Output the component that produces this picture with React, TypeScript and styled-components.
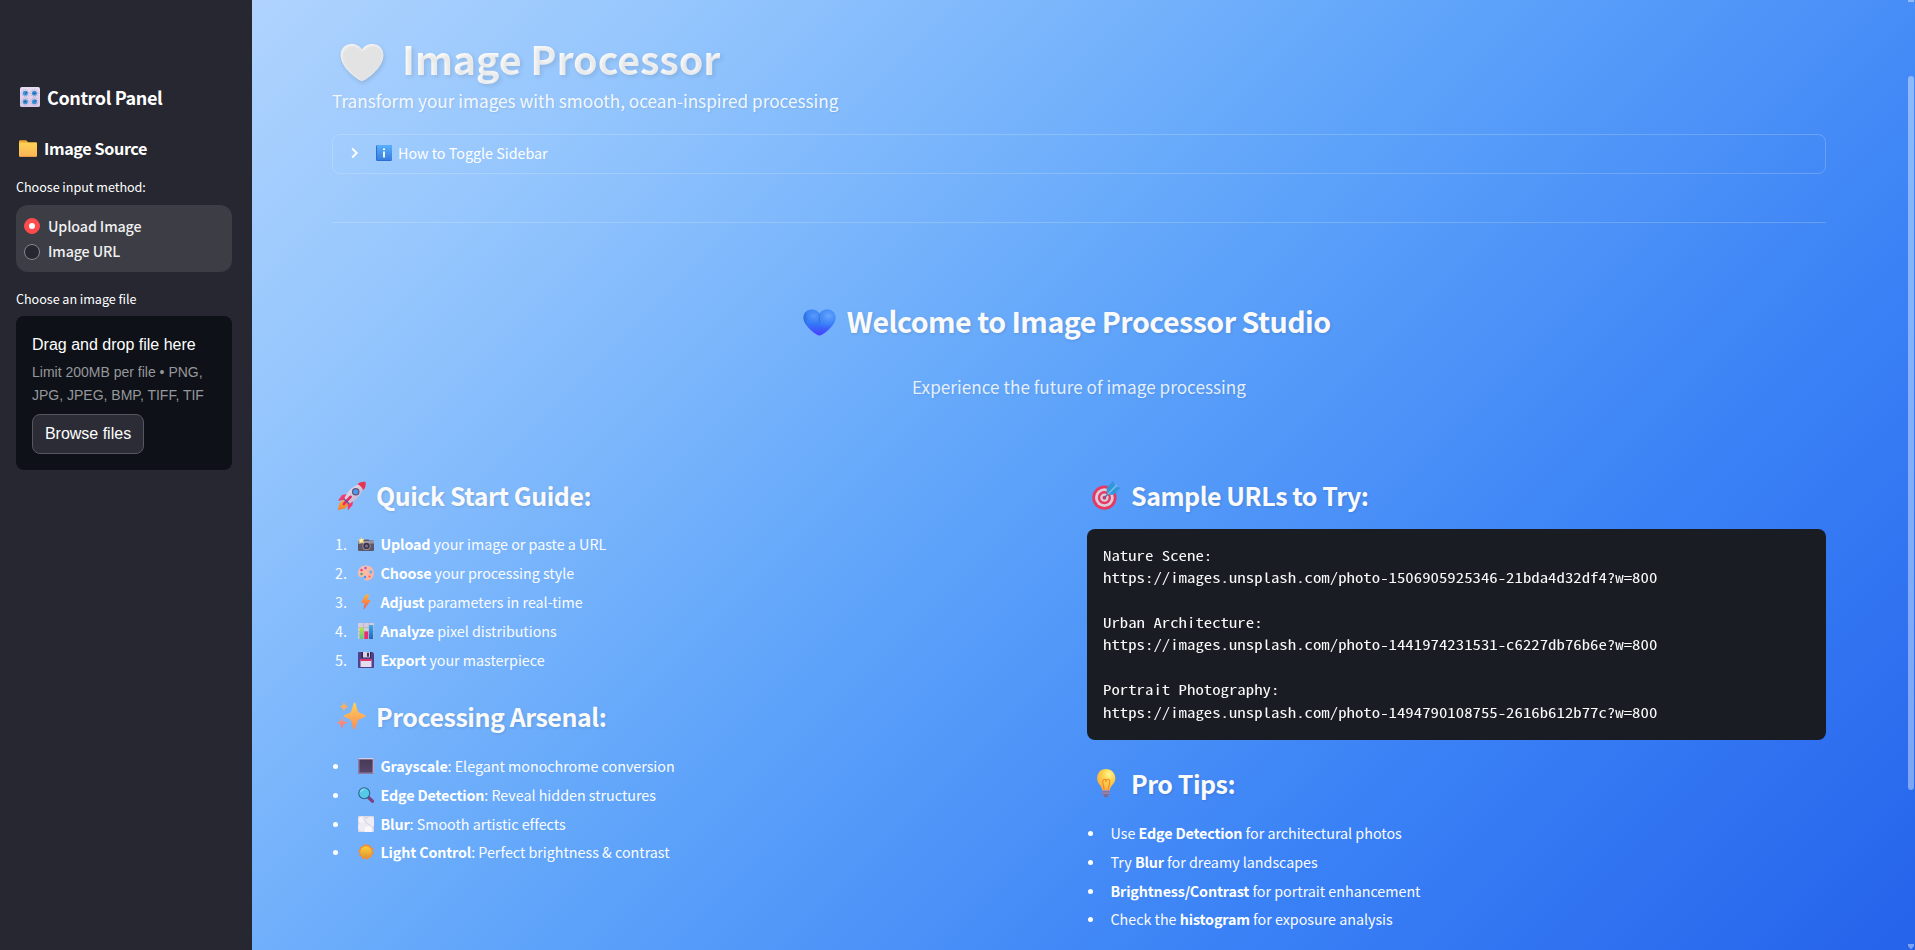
import React from "react";
import styled, { createGlobalStyle } from "styled-components";

const sans = `"Source Sans Pro", "Noto Sans CJK SC", "Noto Sans", sans-serif`;
const mono = `"Noto Sans Mono CJK SC", "Liberation Mono", monospace`;

const GlobalStyle = createGlobalStyle`
  html, body { margin: 0; padding: 0; height: 100%; overflow: hidden; }
  #root { height: 100%; }
  *, *::before, *::after { box-sizing: border-box; }
`;

const Shell = styled.div`
  display: flex;
  position: relative;
  width: 100%;
  height: 950px;
  overflow: hidden;
  color: #fafafa;
  font-family: ${sans};
  background: linear-gradient(135deg, #bfdbfe 0%, #93c5fd 25%, #60a5fa 50%, #3b82f6 75%, #2563eb 100%);
`;

const Sidebar = styled.aside`
  flex: 0 0 252px;
  padding: 79px 20px 0 16px;
  background: #262730;
`;

const SideHeading = styled.h2<{ $size: number; $gap: number; $left: number; $top: number }>`
  display: flex;
  align-items: center;
  gap: ${(p) => p.$gap}px;
  height: 36px;
  margin: ${(p) => p.$top}px 0 0;
  padding-left: ${(p) => p.$left}px;
  font-size: ${(p) => p.$size}px;
  line-height: 36px;
  font-weight: 600;
  letter-spacing: -0.4px;
  white-space: nowrap;
  color: #fff;
`;

const FieldLabel = styled.div<{ $top: number }>`
  margin-top: ${(p) => p.$top}px;
  font-size: 12.6px;
  line-height: 20px;
  letter-spacing: -0.04px;
  color: #fff;
`;

const RadioGroup = styled.div`
  display: flex;
  flex-direction: column;
  gap: 2px;
  height: 67px;
  margin-top: 8px;
  padding: 9px 8px;
  border-radius: 12px;
  background: rgba(255, 255, 255, 0.1);
`;

const RadioRow = styled.div<{ $raise?: number }>`
  display: flex;
  align-items: center;
  gap: 8px;
  height: 24px;
  font-size: 14.3px;
  line-height: 24px;
  font-weight: 500;
  letter-spacing: -0.13px;
  color: #f0f0f1;
  span + span { margin-top: -${(p) => p.$raise ?? 0}px; }
`;

const RadioDot = styled.span<{ $on?: boolean }>`
  display: flex;
  align-items: center;
  justify-content: center;
  width: 16px;
  height: 16px;
  border-radius: 50%;
  border: 1px solid ${(p) => (p.$on ? "#ff4b4b" : "#86868b")};
  background: ${(p) => (p.$on ? "#ff4b4b" : "#262730")};
  &::after {
    content: "";
    width: 6px;
    height: 6px;
    border-radius: 50%;
    background: ${(p) => (p.$on ? "#fff" : "transparent")};
  }
`;

const Dropzone = styled.section`
  height: 154px;
  margin-top: 7px;
  padding: 16px;
  border-radius: 8px;
  background: #0e1117;
  font-family: "Liberation Sans", Arial, sans-serif;
`;

const DropTitle = styled.div`
  font-size: 16px;
  line-height: 25px;
  color: #fff;
`;

const DropHint = styled.div`
  margin-top: 4px;
  font-size: 14px;
  line-height: 23px;
  color: #96979a;
  white-space: nowrap;
`;

const BrowseButton = styled.button`
  width: 112px;
  height: 40px;
  margin-top: 7px;
  padding: 0;
  border: 1px solid #55565e;
  border-radius: 8px;
  background: #2b2c36;
  color: #fff;
  font: 16px "Liberation Sans", Arial, sans-serif;
`;

const Main = styled.main`
  flex: 1;
  min-width: 0;
  padding: 31px 89px 0 80px;
`;

const TitleRow = styled.div`
  display: flex;
  align-items: center;
  gap: 18px;
  height: 53px;
  padding-left: 8px;
`;

const Title = styled.h1`
  margin: 0;
  font-size: 39.5px;
  line-height: 53px;
  font-weight: 700;
  letter-spacing: -0.15px;
  white-space: nowrap;
  background: linear-gradient(45deg, #fff, #fafcff);
  background-clip: text;
  -webkit-background-clip: text;
  -webkit-text-fill-color: transparent;
  text-shadow: 2px 2px 4px rgba(0, 0, 0, 0.1);
`;

const Lead = styled.p<{ $top: number; $center?: boolean }>`
  margin: ${(p) => p.$top}px 0 0;
  font-size: 17.2px;
  line-height: 29px;
  text-align: ${(p) => (p.$center ? "center" : "left")};
  color: ${(p) => (p.$center ? "rgba(255,255,255,0.85)" : "rgba(255,255,255,0.9)")};
  text-shadow: 1px 1px 2px rgba(0, 0, 0, 0.08);
`;

const Expander = styled.div`
  display: flex;
  align-items: center;
  height: 40px;
  margin-top: 19px;
  padding-left: 16px;
  border: 1px solid rgba(250, 250, 250, 0.2);
  border-radius: 8px;
  color: #fff;
  font-size: 14.3px;
  line-height: 24px;
  svg + svg { margin: 0 6px 0 9px; }
  svg, span { position: relative; top: -1px; }
`;

const Divider = styled.hr`
  height: 1px;
  margin: 48px 0 0;
  border: 0;
  background: rgba(250, 250, 250, 0.2);
`;

const Welcome = styled.h2`
  display: flex;
  justify-content: center;
  align-items: center;
  gap: 10.5px;
  height: 38px;
  margin: 79px 0 0;
  padding-right: 24px;
  font-size: 28.6px;
  line-height: 38px;
  font-weight: 600;
  letter-spacing: -0.53px;
  text-shadow: 1px 1px 3px rgba(0, 0, 0, 0.12);
`;

const Columns = styled.div`
  display: grid;
  grid-template-columns: 739px 739px;
  gap: 16px;
  margin-top: 77px;
`;

const Column = styled.section`
  min-width: 0;
`;

const Heading = styled.h3<{ $top?: number }>`
  display: flex;
  align-items: center;
  gap: 10px;
  height: 34px;
  margin: ${(p) => p.$top ?? 0}px 0 0;
  padding-left: 4px;
  font-size: 25px;
  line-height: 34px;
  font-weight: 600;
  letter-spacing: -0.47px;
  white-space: nowrap;
  text-shadow: 1px 1px 3px rgba(0, 0, 0, 0.12);
`;

const List = styled.ul<{ $top: number; $pitch?: number }>`
  display: grid;
  grid-auto-rows: ${(p) => p.$pitch ?? 28.7}px;
  margin: ${(p) => p.$top}px 0 0;
  padding: 0;
  list-style: none;
`;

const Item = styled.li`
  display: flex;
  align-items: center;
  font-size: 14.3px;
  line-height: 28px;
  letter-spacing: -0.01px;
  white-space: pre;
  color: #fafcff;
  b { font-weight: 600; letter-spacing: -0.15px; color: #fff; }
  svg { margin-right: 6.5px; }
`;

const Marker = styled.span<{ $wide?: boolean }>`
  flex: 0 0 ${(p) => (p.$wide ? 26 : 23.5)}px;
  padding-left: ${(p) => (p.$wide ? 3 : 1)}px;
`;

const Bullet = styled.i<{ $shift?: number }>`
  display: block;
  width: 5px;
  height: 5px;
  margin: 1px 0 0 ${(p) => -(p.$shift ?? 0)}px;
  border-radius: 50%;
  background: #fff;
`;

const Code = styled.pre`
  height: 211px;
  margin: 17px 0 0;
  padding: 15px 16px 0;
  overflow: hidden;
  border-radius: 8px;
  background: #1a1c24;
  color: #fafafa;
  font-family: ${mono};
  font-size: 16.81px;
  line-height: 28px;
`;

const CodeText = styled.code`
  display: block;
  font-family: inherit;
  transform: scaleY(0.8);
  transform-origin: 0 0;
`;

const ScrollTrack = styled.div`
  position: absolute;
  top: 0;
  right: 1px;
  width: 6px;
  height: 950px;
  display: flex;
  flex-direction: column;
  color: rgba(255, 255, 255, 0.4);
`;

const ScrollCap = styled.span`
  height: 2px;
  background: currentColor;
`;

const ScrollThumb = styled.span`
  height: 714px;
  margin: 74px 0 154px;
  border-radius: 3px;
  background: currentColor;
`;

type IconProps = { size: number; children: React.ReactNode };
const Icon = ({ size, children }: IconProps) => (
  <svg width={size} height={size} viewBox="0 0 32 32" style={{ flex: "none" }}>{children}</svg>
);

const Grad = ({ id, from, to, x2 = 0, y2 = 1 }: { id: string; from: string; to: string; x2?: number; y2?: number }) => (
  <linearGradient id={id} x1="0" y1="0" x2={x2} y2={y2}>
    <stop offset="0" stopColor={from} /><stop offset="1" stopColor={to} />
  </linearGradient>
);

const heartPath = "M16 31C14 31 .5 21 .5 10.5 .5 5 4 1.500 8.500 1.500c3.500 0 6.200 2 7.500 4.500 1.300-2.500 4-4.500 7.500-4.500 4.500 0 8 3.500 8 9C31.500 21 18 31 16 31Z";

const WhiteHeart = () => (
  <svg width="44" height="40" viewBox="0 0 32 32" preserveAspectRatio="none" style={{ flex: "none", marginTop: 8, overflow: "visible", filter: "drop-shadow(1px 2px 2px rgba(0,0,0,.12))" }}>
    <defs><filter id="wb" x="-20%" y="-20%" width="140%" height="140%"><feGaussianBlur stdDeviation="1" /></filter>
      <clipPath id="wc"><path d={heartPath} /></clipPath></defs>
    <path d={heartPath} fill="#f6f6f6" />
    <g clipPath="url(#wc)"><path d={heartPath} fill="#e3e3e3" filter="url(#wb)" transform="translate(.8 1.200)" /></g>
  </svg>
);

const BlueHeart = () => (
  <Icon size={33}>
    <defs>
      <linearGradient id="bh" x1="0" y1="0" x2="0" y2="1"><stop offset="0" stopColor="#3a84f0" /><stop offset=".55" stopColor="#3278f8" /><stop offset="1" stopColor="#4a3cff" /></linearGradient>
      <radialGradient id="bh2" cx=".78" cy=".25" r=".5"><stop offset="0" stopColor="#68a8ff" /><stop offset="1" stopColor="#3f86f8" stopOpacity="0" /></radialGradient>
      <radialGradient id="bh4" cx=".32" cy=".25" r=".35"><stop offset="0" stopColor="#5b9cfb" /><stop offset="1" stopColor="#3f86f8" stopOpacity="0" /></radialGradient>
      <linearGradient id="bh3"><stop offset="0" stopColor="#1c52ae" stopOpacity=".5" /><stop offset=".15" stopColor="#2c68d0" stopOpacity="0" /></linearGradient>
    </defs>
    <g transform="translate(0 3) scale(1 .86)"><path d={heartPath} fill="url(#bh)" /><path d={heartPath} fill="url(#bh2)" /><path d={heartPath} fill="url(#bh4)" /><path d={heartPath} fill="url(#bh3)" /><path d="M16 6.500V17" stroke="#2a62c8" strokeOpacity=".4" strokeWidth="1.300" /></g>
  </Icon>
);

const Knobs = () => (
  <Icon size={20}>
    <defs><Grad id="kn" from="#e8dcf2" to="#d6c8e8" /></defs>
    <rect width="32" height="32" rx="3" fill="url(#kn)" />
    {[[8.500, 10], [23, 10], [8.500, 23.500], [23, 23.500]].map(([x, y], i) => (
      <g key={i}>
        <circle cx={x} cy={y} r="5.700" fill="none" stroke="#8d7ba3" strokeWidth="1.300" strokeDasharray="1 2.300" />
        <circle cx={x} cy={y} r="4" fill="#3f91d8" />
        <path d={i % 3 === 0 ? `M${x} ${y}l3-2` : `M${x - 2} ${y}h4`} stroke="#174c83" strokeWidth="1.500" />
      </g>
    ))}
  </Icon>
);

const Folder = () => (
  <svg width="18" height="17" viewBox="0 0 18 17" style={{ flex: "none" }}>
    <defs><Grad id="fo" from="#ffd256" to="#fbb454" /></defs>
    <path d="M0 1.500Q0 .2 1.200.2H6.500Q7.400.2 8 1l1.200 1.200H17Q18 2.200 18 3.200V15H0Z" fill="#f0ab30" />
    <rect y="2.800" width="18" height="14" rx="1" fill="url(#fo)" /><path d="M.7 16.500H17.300" stroke="#ea9a48" />
  </svg>
);

const Info = () => (
  <Icon size={16}>
    <defs><Grad id="inf" from="#58b1fb" to="#397de2" /></defs>
    <rect width="32" height="32" rx="3" fill="#2a6fd2" /><rect x="2" width="30" height="30" rx="2" fill="url(#inf)" />
    <circle cx="16" cy="8.500" r="2.200" fill="#fff" /><path d="M16 13v12" stroke="#fff" strokeWidth="3.600" />
  </Icon>
);

const Chevron = () => (
  <svg width="20" height="20" viewBox="0 0 20 20" style={{ flex: "none", marginLeft: -4, marginRight: 2 }} fill="none" stroke="#fff" strokeWidth="1.900">
    <path d="M7.200 5.500 11.700 10 7.200 14.500" />
  </svg>
);

const Rocket = () => (
  <Icon size={30}>
    <defs><Grad id="rk" from="#f3eaf6" to="#b8a6c4" x2={1} /><Grad id="fl" from="#ffb43b" to="#f47b2a" /></defs>
    <g transform="translate(.5 1)">
      <path d="M7 20 3 24 1.500 31 9 29.500 13 25Z" fill="url(#fl)" />
      <path d="M12 14 6 15 1.500 21 9 20ZM18 20l-1 6-5 5.500L12 23Z" fill="#f13b70" />
      <path d="M29 3C20 2.500 12 10 8 19.500L13 24.500C22 20 29.500 12 29 3Z" fill="url(#rk)" />
      <path d="M22.500 3.500C25 1 28.500.5 31 1 31.500 4 31 7 28.500 10 27.500 7 25 4.500 22.500 3.500Z" fill="#e9344f" />
      <circle cx="20.500" cy="11.500" r="4" fill="#61517a" /><circle cx="20.500" cy="11.500" r="2.700" fill="#4b9cef" />
      <path d="M15 17 8 24.500" stroke="#e52b68" strokeWidth="3" strokeLinecap="round" /><path d="M8 19l5.500 5.500" stroke="#6e4e8d" strokeWidth="1.500" />
    </g>
  </Icon>
);

const Camera = () => (
  <Icon size={16}>
    <rect y="9" width="32" height="21" rx="2" fill="#5d5767" /><rect y="10" width="32" height="5" fill="#9b93a1" />
    <path d="M10 10l2-3h9l2 3Z" fill="#625a6e" /><circle cx="17" cy="20" r="8" fill="#a9a2b0" /><circle cx="17" cy="20" r="6.500" fill="#3b3345" /><circle cx="17" cy="20" r="3" fill="#7e7294" />
    <path d="M6 2 8 6 13 6 10 10 12 14 7 13 3 16 3 11 0 7 5 7Z" fill="#ffe07a" /><circle cx="6.500" cy="9" r="2.500" fill="#fff6c6" />
  </Icon>
);

const Palette = () => (
  <Icon size={16}>
    <defs><Grad id="pl" from="#ffc0a5" to="#fbb0a2" x2={1} /></defs>
    <path d="M16 1C7 1 0 8 0 17c0 6 5 9 9 7 3-1 4 1 4 4 1 4 6 4 10 2 6-3 9-8 9-14C32 7 25 1 16 1Z" fill="url(#pl)" />
    <circle cx="25.500" cy="14" r="3.300" fill="#6bb0f9" /><circle cx="15" cy="6" r="2.500" fill="#9b5be0" /><circle cx="7" cy="10" r="2.500" fill="#e14284" /><circle cx="7" cy="18" r="2.500" fill="#3fae80" /><circle cx="14" cy="24" r="2.500" fill="#4694ee" /><circle cx="23" cy="23" r="2.200" fill="#f9654b" />
  </Icon>
);

const Bolt = () => (
  <Icon size={16}>
    <defs><Grad id="bo" from="#ffb33c" to="#f15a4a" /></defs>
    <path d="M18 1h4.500L18.500 12H24q2 0 .8 1.800L12.500 30q-1.700 1.300-1.300-1L13 18H8q-2 0-1.200-2L14 3q1.200-2 4-2Z" fill="url(#bo)" />
  </Icon>
);

const Bars = () => (
  <Icon size={16}>
    <defs><Grad id="ba" from="#b5e83b" to="#5cc887" /><Grad id="bb" from="#41a8ea" to="#176bc0" /></defs>
    <rect width="32" height="32" rx="2" fill="#d5cddd" /><path d="M0 9H32M0 17H32M0 24H32M11 0V32M22 0V32" stroke="#a89fb4" strokeWidth="1" />
    <rect x="3" y="9" width="8" height="23" fill="url(#ba)" /><rect x="12.500" y="17" width="8" height="15" fill="#e62d70" /><rect x="22" y="4" width="8.500" height="28" fill="url(#bb)" />
  </Icon>
);

const Floppy = () => (
  <Icon size={16}>
    <path d="M0 2Q0 0 2 0H29L32 3V30Q32 32 30 32H2Q0 32 0 30Z" fill="#51408a" /><rect x="7" width="19" height="12" fill="#2e2553" />
    <path d="M10 0H24V11H10Z" fill="#d9d2e3" /><rect x="18" y="1.500" width="4" height="8" fill="#40345e" /><rect x="5" y="15" width="22" height="15" fill="#e7dcee" /><rect x="5" y="14" width="22" height="4" fill="#e03368" />
  </Icon>
);

const Sparkles = () => (
  <Icon size={30}>
    <defs><Grad id="sp" from="#ffd257" to="#fb8b56" /><Grad id="sq" from="#ff9c72" to="#f9717b" /></defs>
    <path d="M19 2Q20 1 21 3L23 10Q24 12 26 13L31 15Q32.500 16 31 17L25 19.500Q23.500 20 23 22L20.500 29.500Q19.500 31 18.500 29.500L16.500 22Q16 20 14 19L9 17Q7.500 16 9 15L14 13Q16 12 16.500 10Z" fill="url(#sp)" />
    <path d="M8.500 1 10 4.500 13.500 6 10 7.500 8.500 11 7 7.500 4 6 7 4.500Z" fill="#fcaf5a" />
    <path d="M6.500 17 8 21.500 12.500 23 8 25 6.500 30 5 25 .5 23 5 21.500Z" fill="url(#sq)" />
  </Icon>
);

const SquareButton = () => (
  <Icon size={16}>
    <defs><Grad id="sb" from="#463a56" to="#56466a" /></defs>
    <rect width="32" height="32" rx="1" fill="#8d7ca2" /><path d="M0 0H32L29 3H3Z" fill="#d8cbe6" /><path d="M32 0V32L29 29V3Z" fill="#b8a4cb" /><rect x="3" y="3" width="26" height="26" fill="url(#sb)" />
  </Icon>
);

const Magnifier = () => (
  <Icon size={16}>
    <path d="M20 20 29 28.500" stroke="#7b4388" strokeWidth="6.500" strokeLinecap="round" /><circle cx="12.500" cy="12.500" r="12" fill="#34618b" /><circle cx="12.500" cy="12.500" r="9.800" fill="#54c9e8" /><path d="M5 10a8 8 0 0 1 8-5" stroke="#91e1f2" strokeWidth="2.500" fill="none" />
  </Icon>
);

const Fog = () => (
  <Icon size={16}>
    <rect width="32" height="32" rx="2" fill="#dcd6e5" /><circle cx="8" cy="8" r="7" fill="#f5f2f8" /><circle cx="25" cy="12" r="10" fill="#efecf5" /><circle cx="9" cy="22" r="9" fill="#eeebf4" /><circle cx="21" cy="28" r="8" fill="#faf8fc" /><path d="M12 2c-2 6 3 8 5 11s6 4 9 8" stroke="#cac6d6" strokeWidth="1.500" fill="none" />
  </Icon>
);

const Sun = () => (
  <Icon size={16}>
    <defs><Grad id="sn" from="#ffd036" to="#dc9738" /></defs>
    <path d="M16 0 20 3 25 2 26 7 31 9 29 14 32 18 28 21 28 26 22.500 27 19 32 15 28.500 9 30.500 7.500 25.500 2 23 3.500 18 0 14 4 11 4 6 9.500 5 12 1Z" fill="#f78b31" /><circle cx="16" cy="16" r="11.500" fill="url(#sn)" />
  </Icon>
);

const Target = () => (
  <Icon size={30}>
    <g transform="translate(.8 .3)">
      <circle cx="13.500" cy="18.500" r="13" fill="#e63962" /><circle cx="13.500" cy="18.500" r="10" fill="#dccbdc" /><circle cx="13.500" cy="18.500" r="7" fill="#e63962" /><circle cx="13.500" cy="18.500" r="4.500" fill="#dccbdc" /><circle cx="13.500" cy="18.500" r="2" fill="#c33966" />
      <path d="M14 18 24 8" stroke="#5c6e9b" strokeWidth="1.600" /><path d="M16 13.500V8L23 .5 24.500 6.500 30.500 8 23.500 15.500H18Z" fill="#3396d8" /><path d="M17 15 27 5" stroke="#70c3ef" strokeWidth="1.500" />
    </g>
  </Icon>
);

const Bulb = () => (
  <Icon size={30}>
    <defs><radialGradient id="bu" cx=".65" cy=".25" r=".8"><stop offset="0" stopColor="#fff5a0" /><stop offset=".35" stopColor="#ffd84e" /><stop offset="1" stopColor="#f9a83f" /></radialGradient></defs>
    <path d="M16 1C10 1 6.500 5.500 6.500 11c0 6 5 7.500 5.500 13h8c.5-5.500 6-7 6-13C26 5.500 22 1 16 1Z" fill="url(#bu)" />
    <path d="M14 23 12.500 15q0-3 2-3 1.500 0 1.500 3 0-3 2-3t2 3L18.500 23" stroke="#f28b2c" strokeWidth="1.300" fill="none" /><rect x="12" y="23.500" width="8" height="5.500" rx="1" fill="#a493b5" /><path d="M12 25.500h8M12 28h8" stroke="#6e5b85" /><path d="M14 29h4v2h-4Z" fill="#79678e" />
  </Icon>
);

const steps = [
  { icon: <Camera />, name: "Upload", rest: " your image or paste a URL" },
  { icon: <Palette />, name: "Choose", rest: " your processing style" },
  { icon: <Bolt />, name: "Adjust", rest: " parameters in real-time" },
  { icon: <Bars />, name: "Analyze", rest: " pixel distributions" },
  { icon: <Floppy />, name: "Export", rest: " your masterpiece" },
];

const arsenal = [
  { icon: <SquareButton />, name: "Grayscale", rest: ": Elegant monochrome conversion" },
  { icon: <Magnifier />, name: "Edge Detection", rest: ": Reveal hidden structures" },
  { icon: <Fog />, name: "Blur", rest: ": Smooth artistic effects" },
  { icon: <Sun />, name: "Light Control", rest: ": Perfect brightness & contrast" },
];

const tips = [
  ["Use ", "Edge Detection", " for architectural photos"],
  ["Try ", "Blur", " for dreamy landscapes"],
  ["", "Brightness/Contrast", " for portrait enhancement"],
  ["Check the ", "histogram", " for exposure analysis"],
];

const samples = `Nature Scene:
https://images.unsplash.com/photo-1506905925346-21bda4d32df4?w=800

Urban Architecture:
https://images.unsplash.com/photo-1441974231531-c6227db76b6e?w=800

Portrait Photography:
https://images.unsplash.com/photo-1494790108755-2616b612b77c?w=800`;

export default function App() {
  return (
    <Shell>
      <GlobalStyle />
      <Sidebar>
        <SideHeading $size={18} $gap={7} $left={4} $top={0}><Knobs /><span>Control Panel</span></SideHeading>
        <SideHeading $size={16.2} $gap={7} $left={3} $top={15}><Folder /><span>Image Source</span></SideHeading>
        <FieldLabel $top={11}>Choose input method:</FieldLabel>
        <RadioGroup>
          <RadioRow><RadioDot $on /><span>Upload Image</span></RadioRow>
          <RadioRow $raise={2}><RadioDot /><span>Image URL</span></RadioRow>
        </RadioGroup>
        <FieldLabel $top={17}>Choose an image file</FieldLabel>
        <Dropzone>
          <DropTitle>Drag and drop file here</DropTitle>
          <DropHint>Limit 200MB per file • PNG,<br />JPG, JPEG, BMP, TIFF, TIF</DropHint>
          <BrowseButton>Browse files</BrowseButton>
        </Dropzone>
      </Sidebar>
      <Main>
        <TitleRow><WhiteHeart /><Title>Image Processor</Title></TitleRow>
        <Lead $top={2}>Transform your images with smooth, ocean-inspired processing</Lead>
        <Expander><Chevron /><Info /><span>How to Toggle Sidebar</span></Expander>
        <Divider />
        <Welcome><BlueHeart /><span>Welcome to Image Processor Studio</span></Welcome>
        <Lead $top={32} $center>Experience the future of image processing</Lead>
        <Columns>
          <Column>
            <Heading><Rocket /><span>Quick Start Guide:</span></Heading>
            <List as="ol" $top={17.500} $pitch={29}>
              {steps.map((s, i) => (
                <Item key={s.name}><Marker $wide>{i + 1}.</Marker>{s.icon}<span><b>{s.name}</b>{s.rest}</span></Item>
              ))}
            </List>
            <Heading $top={24.500}><Sparkles /><span>Processing Arsenal:</span></Heading>
            <List $top={19}>
              {arsenal.map((s) => (
                <Item key={s.name}><Marker $wide><Bullet $shift={2} /></Marker>{s.icon}<span><b>{s.name}</b>{s.rest}</span></Item>
              ))}
            </List>
          </Column>
          <Column>
            <Heading><Target /><span>Sample URLs to Try:</span></Heading>
            <Code><CodeText>{samples}</CodeText></Code>
            <Heading $top={26}><Bulb /><span>Pro Tips:</span></Heading>
            <List $top={19}>
              {tips.map(([a, b, c]) => (
                <Item key={b}><Marker><Bullet /></Marker><span>{a}<b>{b}</b>{c}</span></Item>
              ))}
            </List>
          </Column>
        </Columns>
      </Main>
      <ScrollTrack>
        <ScrollCap />
        <ScrollThumb />
        <svg width="6" height="6" viewBox="0 0 6 6"><path d="M0 0H6V2L3.500 5H2.500L0 2Z" fill="currentColor" /></svg>
      </ScrollTrack>
    </Shell>
  );
}
